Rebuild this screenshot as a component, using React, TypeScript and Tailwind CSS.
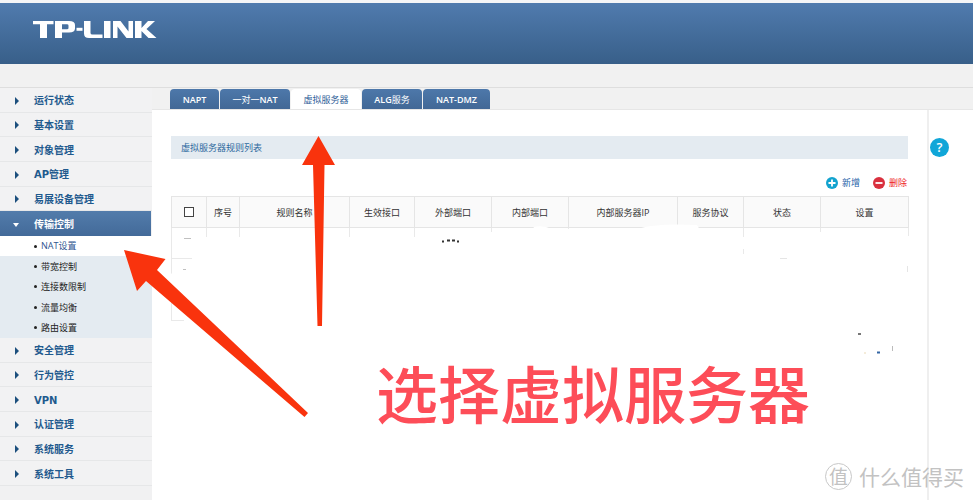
import React from "react";

const menuTop = ["运行状态", "基本设置", "对象管理", "AP管理", "易展设备管理"];
const subMenu = ["NAT设置", "带宽控制", "连接数限制", "流量均衡", "路由设置"];
const menuBottom = ["安全管理", "行为管控", "VPN", "认证管理", "系统服务", "系统工具"];

const tabs = [
  { cjk: "", latin: "NAPT", tail: "", width: "w-[49px]" },
  { cjk: "一对一", latin: "NAT", tail: "", width: "w-[70px]" },
  { cjk: "虚拟服务器", latin: "", tail: "", width: "w-[70px]", active: true },
  { cjk: "", latin: "ALG", tail: "服务", width: "w-[60px]" },
  { cjk: "", latin: "NAT-DMZ", tail: "", width: "w-[67px]" },
];

const columns = [
  { label: "序号", width: "w-[33px]" },
  { label: "规则名称", width: "w-[110px]" },
  { label: "生效接口", width: "w-[65px]" },
  { label: "外部端口", width: "w-[77px]" },
  { label: "内部端口", width: "w-[77px]" },
  { label: "内部服务器IP", width: "w-[109px]" },
  { label: "服务协议", width: "w-[66px]" },
  { label: "状态", width: "w-[77px]" },
  { label: "设置", width: "w-[88px]" },
];

function MenuItem({ label }: { label: string }) {
  return (
    <li className="border-b border-[#e6e7e8] bg-[#f2f2f3]">
      <a href="#" className="flex h-full items-center pl-[15px] pt-[2px] text-[#1f5a8e]">
        <svg viewBox="0 0 4 8" className="mr-[15px] h-[8px] w-[4px]" fill="#1c4f7d">
          <path d="M0 0L4 4L0 8Z" />
        </svg>
        {label}
      </a>
    </li>
  );
}

function Sidebar() {
  return (
    <nav className="w-[152px] shrink-0 bg-[#f1f1f2] font-['DejaVu_Sans','Noto_Sans_CJK_SC',sans-serif] text-[10px] font-bold">
      <ul className="grid h-[148px] auto-rows-fr">
        {menuTop.map((m) => (
          <MenuItem key={m} label={m} />
        ))}
        <li className="mr-px bg-linear-to-b from-[#527cab] to-[#436a99]">
          <a href="#" className="flex h-full items-center pl-[13px] pt-[2px] text-white">
            <svg viewBox="0 0 6 4" className="mr-[15px] h-[4px] w-[6px]" fill="white">
              <path d="M0 0H6L3 4Z" />
            </svg>
            传输控制
          </a>
        </li>
      </ul>
      <ul className="grid h-[102px] auto-rows-fr bg-[#e4ebf1] font-['Open_Sans','Noto_Sans_CJK_SC',sans-serif] text-[9px] font-normal">
        {subMenu.map((m, i) => (
          <li key={m} className={i === 0 ? "bg-white text-[#2e5590]" : "text-[#222]"}>
            <a href="#" className="flex h-full items-center gap-[4px] pl-[34px]">
              <span className="size-[3px] rounded-full bg-[#222]" />
              {m}
            </a>
          </li>
        ))}
      </ul>
      <ul className="grid h-[148px] auto-rows-fr">
        {menuBottom.map((m) => (
          <MenuItem key={m} label={m} />
        ))}
      </ul>
    </nav>
  );
}

function Logo() {
  return (
    <svg role="img" aria-label="TP-LINK" viewBox="0 0 124 17" className="ml-[33px] h-[17px] w-[124px]" fill="white">
      <path d="M0 0H20.500V3.200H14V17H7V3.200H0Z" />
      <path fillRule="evenodd" d="M22 0H36Q42 0 42 4V7.500Q42 11.500 36 11.500H29V17H22ZM29 3.200V8.300H34Q35.500 8.300 35.500 7V4.500Q35.500 3.200 34 3.200Z" />
      <path d="M43.500 6.800H49.500V9.800H43.500Z" />
      <path d="M51 0H57.500V12Q57.500 13.600 59.500 13.600H69.500V17H56Q51 17 51 12.500Z" />
      <path d="M71 0H77.500V17H71Z" />
      <path d="M80 0H87.500L95.500 10.500V0H100V17H93.500L84.500 5.500V17H80Z" />
      <path d="M102 0H108.500V7L115 0H122L113.500 8L123.500 17H115.500L108.500 10V17H102Z" />
    </svg>
  );
}

/* Blanked-out rows plus the hand-drawn arrows pointing at the menu and the tab. */
function Annotations() {
  return (
    <svg viewBox="0 0 973 500" className="pointer-events-none absolute left-0 top-0 h-[500px] w-[973px]" aria-hidden="true">
      <path
        fill="white"
        d="M192 237H433L440 232H531L534 227Q543 225 552 229H638Q655 223 697 225L700 230H735L737 237H745V249H742V254H748L752 232H818L822 232H904V236H910V322H184V310L169 300V274L180 272H192Z"
      />
      <g strokeWidth="1" fill="none">
        <path d="M184 238.500H191M183 269.500H186" stroke="#c0c0c0" />
        <path d="M442 241.500H444M447 240.500H450M452 240.500H455M457 241.500H459" stroke="#333" strokeWidth="2" />
        <path d="M780 258.500H787M907.500 266V272" stroke="#e5e5e5" />
        <path d="M858 334H861" stroke="#777" strokeWidth="2" />
        <path d="M877 352.500H880" stroke="#3567a5" strokeWidth="2" />
        <path d="M892.500 346V351" stroke="#bbb" />
        <path d="M864 353H866" stroke="#ead9b5" />
      </g>
      <g fill="#f9330d">
        <path d="M318.500 136L335 165H324.500L322 326H317.500L313 165H302Z" />
        <path d="M124 250L165.500 259L157 270L308 413L304.500 417L146 281L137 291Z" />
      </g>
    </svg>
  );
}

export default function App() {
  return (
    <div className="relative flex min-h-screen flex-col overflow-hidden bg-[#f1f1f1] font-['Open_Sans','Noto_Sans_CJK_SC',sans-serif] text-[9px] text-[#333]">
      <header className="h-[64px] border-t-[3px] border-[#f4f5f7] bg-linear-to-b from-[#507bae] to-[#385f89] pt-[18px]">
        <Logo />
      </header>
      <div className="h-[24px] border-b border-[#dedede]" />
      <div className="flex flex-1">
        <Sidebar />
        <div className="flex min-w-0 flex-1 flex-col">
          <div role="tablist" className="flex h-[22px] items-end gap-px border-b border-[#e6e6e6] pl-[18px]">
            {tabs.map((t) => (
              <button
                key={t.cjk + t.latin}
                role="tab"
                aria-selected={!!t.active}
                className={`${t.width} h-[20px] shrink-0 rounded-t-[4px] pt-px ${
                  t.active ? "bg-white text-[#2f5e98]" : "bg-linear-to-b from-[#4d78aa] to-[#426896] text-white"
                }`}
              >
                {t.cjk}
                <span className="font-semibold">{t.latin}</span>
                {t.tail}
              </button>
            ))}
          </div>
          <div className="flex flex-1 bg-white">
            <main className="min-w-0 flex-1 px-[19px] pt-[26px]">
              <h1 className="flex h-[23px] items-center bg-[#e4ebf1] pl-[10px] text-[#2e6a9e]">虚拟服务器规则列表</h1>
              <div className="flex h-[37px] items-center justify-end gap-[13px] pr-px pt-[11px]">
                <button className="flex items-center gap-[4px] text-[#1b62a8]">
                  <svg viewBox="0 0 12 12" className="size-[12px]">
                    <circle cx="6" cy="6" r="6" fill="#12a3cf" />
                    <path d="M6 2.500V9.500M2.500 6H9.500" stroke="white" strokeWidth="1.8" />
                  </svg>
                  新增
                </button>
                <button className="flex items-center gap-[4px] text-[#ee1c25]">
                  <svg viewBox="0 0 12 12" className="size-[12px]">
                    <circle cx="6" cy="6" r="6" fill="#d9303e" />
                    <path d="M2.500 6H9.500" stroke="white" strokeWidth="1.8" />
                  </svg>
                  删除
                </button>
              </div>
              <table className="w-full table-fixed border-collapse">
                <thead>
                  <tr className="h-[31px] bg-[#fafafa]">
                    <th className="w-[35px] border border-[#e5e5e5] p-0">
                      <input
                        type="checkbox"
                        aria-label="全选"
                        className="mx-auto block size-[10px] appearance-none border border-[#444] bg-white"
                      />
                    </th>
                    {columns.map((c) => (
                      <th key={c.label} className={`${c.width} border border-[#e5e5e5] p-0 pt-px font-normal`}>
                        {c.label}
                      </th>
                    ))}
                  </tr>
                </thead>
                <tbody>
                  {[0, 1, 2].map((r) => (
                    <tr key={r} className="h-[31px]">
                      <td className="border border-[#e9e9e9] p-0" />
                      {columns.map((c) => (
                        <td key={c.label} className="border border-[#e9e9e9] p-0" />
                      ))}
                    </tr>
                  ))}
                </tbody>
              </table>
            </main>
            <aside className="w-[46px] shrink-0 border-l-2 border-[#efefef] pl-[1px] pt-[28px]">
              <button
                aria-label="帮助"
                className="flex size-[19px] items-center justify-center rounded-full bg-[#10a6d8] text-[13px] font-semibold text-white"
              >
                ?
              </button>
            </aside>
          </div>
        </div>
      </div>
      <Annotations />
      <p className="absolute left-[376px] top-[361px] whitespace-nowrap font-['Noto_Sans_CJK_SC',sans-serif] text-[62px] font-medium leading-[62px] text-[#fd4d58]">
        选择虚拟服务器
      </p>
      <div className="absolute bottom-[10px] right-[9px] flex items-center gap-[7px] font-['Noto_Sans_CJK_SC',sans-serif] text-[21px] leading-[28px] text-[#c2c2c2]">
        <span className="flex size-[27px] items-center justify-center rounded-full border border-[#c8c8c8] text-[19px]">值</span>
        <span>什么值得买</span>
      </div>
    </div>
  );
}
